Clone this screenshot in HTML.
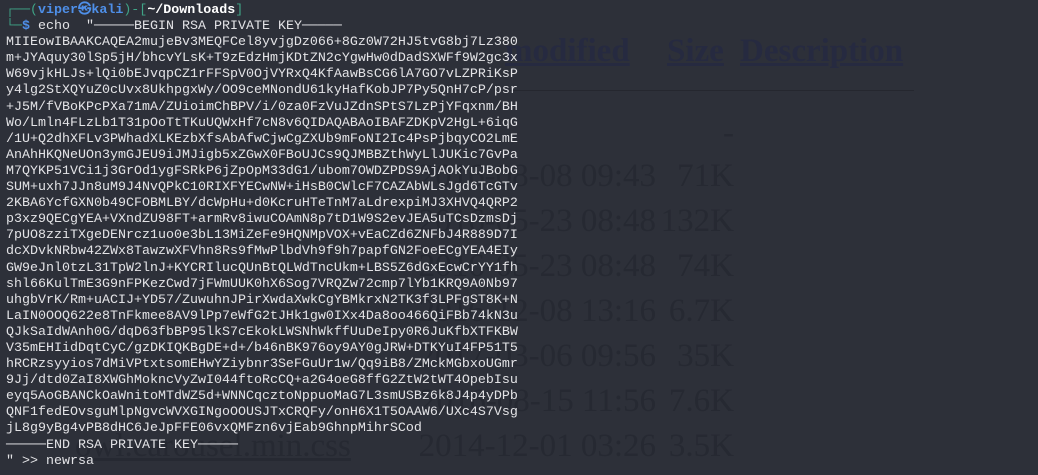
<!DOCTYPE html>
<html><head><meta charset="utf-8"><style>
body{margin:0;width:1038px;height:475px;background:#2d3039;overflow:hidden;position:relative;font-family:"Liberation Mono",monospace;}
.bg{position:absolute;font-family:"Liberation Serif",serif;color:#262932;font-size:33px;white-space:pre;line-height:36px;}
.d{left:300px;width:356px;text-align:right}
.s{left:640px;width:94px;text-align:right}
.hd{position:absolute;font-family:"Liberation Serif",serif;color:#262a40;font-size:33px;font-weight:bold;text-decoration:underline;line-height:36px;top:33px}
.term{position:absolute;left:6px;top:3px;font-size:13.33px;line-height:16.1px;color:#e3e3e6;white-space:pre;}
.g{color:#3fa386}.b{color:#4e8fe8;font-weight:bold}.w{color:#fff;font-weight:bold}
</style></head><body>
<div class="hd" style="left:505px">modified</div>
<div class="hd" style="left:667px">Size</div>
<div class="hd" style="left:740px">Description</div>
<div style="position:absolute;left:510px;top:90px;width:404px;height:1px;background:#25272f"></div>
<div class="bg s" style="top:115px">-</div>
<div class="bg d" style="top:158px">2016-08-08 09:43</div><div class="bg s" style="top:158px">71K</div>
<div class="bg d" style="top:203px">2016-05-23 08:48</div><div class="bg s" style="top:203px">132K</div>
<div class="bg d" style="top:248px">2016-05-23 08:48</div><div class="bg s" style="top:248px">74K</div>
<div class="bg d" style="top:293px">2016-12-08 13:16</div><div class="bg s" style="top:293px">6.7K</div>
<div class="bg d" style="top:338px">2017-03-06 09:56</div><div class="bg s" style="top:338px">35K</div>
<div class="bg d" style="top:383px">2016-08-15 11:56</div><div class="bg s" style="top:383px">7.6K</div>
<div class="bg d" style="top:428px">2014-12-01 03:26</div><div class="bg s" style="top:428px">3.5K</div>
<div class="bg" style="left:75px;top:428px;text-decoration:underline">owl.carousel.min.css</div>
<div class="term"><span class="g">┌──(</span><span class="b">viper㉿kali</span><span class="g">)-[</span><span class="w">~/Downloads</span><span class="g">]</span>
<span class="g">└─</span><span class="b">$</span> echo  "─────BEGIN RSA PRIVATE KEY─────
MIIEowIBAAKCAQEA2mujeBv3MEQFCel8yvjgDz066+8Gz0W72HJ5tvG8bj7Lz380
m+JYAquy30lSp5jH/bhcvYLsK+T9zEdzHmjKDtZN2cYgwHw0dDadSXWFf9W2gc3x
W69vjkHLJs+lQi0bEJvqpCZ1rFFSpV0OjVYRxQ4KfAawBsCG6lA7GO7vLZPRiKsP
y4lg2StXQYuZ0cUvx8UkhpgxWy/OO9ceMNondU61kyHafKobJP7Py5QnH7cP/psr
+J5M/fVBoKPcPXa71mA/ZUioimChBPV/i/0za0FzVuJZdnSPtS7LzPjYFqxnm/BH
Wo/Lmln4FLzLb1T31pOoTtTKuUQWxHf7cN8v6QIDAQABAoIBAFZDKpV2HgL+6iqG
/1U+Q2dhXFLv3PWhadXLKEzbXfsAbAfwCjwCgZXUb9mFoNI2Ic4PsPjbqyCO2LmE
AnAhHKQNeUOn3ymGJEU9iJMJigb5xZGwX0FBoUJCs9QJMBBZthWyLlJUKic7GvPa
M7QYKP51VCi1j3GrOd1ygFSRkP6jZpOpM33dG1/ubom7OWDZPDS9AjAOkYuJBobG
SUM+uxh7JJn8uM9J4NvQPkC10RIXFYECwNW+iHsB0CWlcF7CAZAbWLsJgd6TcGTv
2KBA6YcfGXN0b49CFOBMLBY/dcWpHu+d0KcruHTeTnM7aLdrexpiMJ3XHVQ4QRP2
p3xz9QECgYEA+VXndZU98FT+armRv8iwuCOAmN8p7tD1W9S2evJEA5uTCsDzmsDj
7pUO8zziTXgeDENrcz1uo0e3bL13MiZeFe9HQNMpVOX+vEaCZd6ZNFbJ4R889D7I
dcXDvkNRbw42ZWx8TawzwXFVhn8Rs9fMwPlbdVh9f9h7papfGN2FoeECgYEA4EIy
GW9eJnl0tzL31TpW2lnJ+KYCRIlucQUnBtQLWdTncUkm+LBS5Z6dGxEcwCrYY1fh
shl66KulTmE3G9nFPKezCwd7jFWmUUK0hX6Sog7VRQZw72cmp7lYb1KRQ9A0Nb97
uhgbVrK/Rm+uACIJ+YD57/ZuwuhnJPirXwdaXwkCgYBMkrxN2TK3f3LPFgST8K+N
LaIN0OOQ622e8TnFkmee8AV9lPp7eWfG2tJHk1gw0IXx4Da8oo466QiFBb74kN3u
QJkSaIdWAnh0G/dqD63fbBP95lkS7cEkokLWSNhWkffUuDeIpy0R6JuKfbXTFKBW
V35mEHIidDqtCyC/gzDKIQKBgDE+d+/b46nBK976oy9AY0gJRW+DTKYuI4FP51T5
hRCRzsyyios7dMiVPtxtsomEHwYZiybnr3SeFGuUr1w/Qq9iB8/ZMckMGbxoUGmr
9Jj/dtd0ZaI8XWGhMokncVyZwI044ftoRcCQ+a2G4oeG8ffG2ZtW2tWT4OpebIsu
eyq5AoGBANCkOaWnitoMTdWZ5d+WNNCqcztoNppuoMaG7L3smUSBz6k8J4p4yDPb
QNF1fedEOvsguMlpNgvcWVXGINgoOOUSJTxCRQFy/onH6X1T5OAAW6/UXc4S7Vsg
jL8g9yBg4vPB8dHC6JeJpFFE06vxQMFzn6vjEab9GhnpMihrSCod
─────END RSA PRIVATE KEY─────
" >> newrsa</div>
</body></html>
